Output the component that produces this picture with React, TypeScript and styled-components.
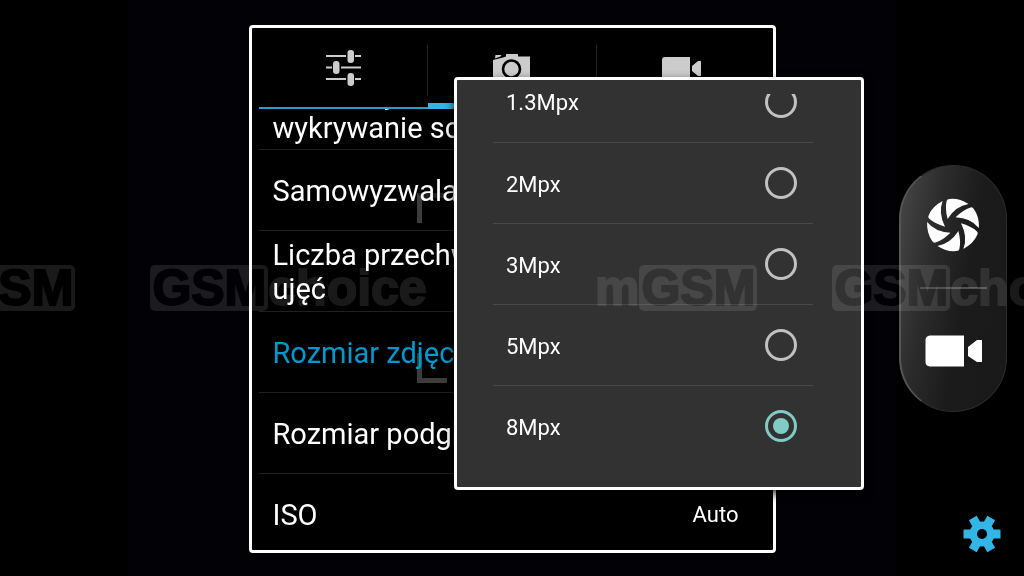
import React, { useState } from "react";
import styled, { createGlobalStyle } from "styled-components";

const GlobalStyle = createGlobalStyle`
  *, *::before, *::after { box-sizing: border-box; }
  body {
    margin: 0;
    background: #000;
    color: #fff;
    font-family: Roboto, "Noto Sans", sans-serif;
  }
  button {
    margin: 0;
    padding: 0;
    border: 0;
    background: none;
    color: inherit;
    font: inherit;
    text-align: left;
  }
`;

const Screen = styled.div`
  position: relative;
  display: grid;
  grid-template-columns: 1fr 6fr 1fr;
  min-height: 100vh;
  overflow: hidden;
`;

const Viewfinder = styled.main`
  grid-column: 2;
  display: flex;
  justify-content: center;
  align-items: flex-start;
  padding: 25px 0 23px;
  background: #020106;
`;

const Panel = styled.section`
  position: relative;
  width: 527px;
  padding: 0 7px;
  border: 3px solid #fff;
  border-radius: 4px;
  background: #000;
`;

const Tabs = styled.nav`
  display: grid;
  grid-template-columns: repeat(3, 1fr);
  height: 81px;
`;

const Tab = styled.button<{ $active?: boolean }>`
  display: flex;
  flex-direction: column;
  align-items: center;
  justify-content: space-between;
  border-bottom: ${(p) => (p.$active ? "6px solid #33b5e5" : "2px solid #2a9bd0")};
  background: linear-gradient(#262626, #262626) right 17px / 1px 51px no-repeat;
  background-position: right 0 top 17px;
  &:last-child { background: none; }
  svg { display: block; margin-top: 20px; }
`;

const SettingsList = styled.ul`
  position: relative;
  height: 441px;
  margin: 0;
  padding: 0;
  overflow: hidden;
  list-style: none;
`;

const SettingItem = styled.li<{ $scrolled?: boolean }>`
  display: flex;
  align-items: ${(p) => (p.$scrolled ? "flex-end" : "center")};
  height: ${(p) => (p.$scrolled ? 41 : 81)}px;
  padding-bottom: ${(p) => (p.$scrolled ? 4 : 0)}px;
  border-bottom: 1px solid #202020;
`;

const SettingButton = styled.button<{ $selected?: boolean }>`
  display: flex;
  flex: 1;
  align-items: center;
  justify-content: space-between;
  padding: 2px 27px 0 14px;
  color: ${(p) => (p.$selected ? "#0099cc" : "#fff")};
  font-size: 29px;
  line-height: 34px;
`;

const SettingName = styled.span`
  max-width: 340px;
`;

const SettingValue = styled.span`
  font-size: 22px;
`;

const FocusFrame = styled.div`
  position: absolute;
  top: 165px;
  left: 165px;
  display: grid;
  grid-template-columns: 30px 30px;
  justify-content: space-between;
  align-content: space-between;
  width: 190px;
  height: 190px;
`;

const FocusCorner = styled.span<{ $side: "left" | "right"; $end: "top" | "bottom" }>`
  height: 30px;
  border: 0 solid #3c3c3c;
  border-${(p) => p.$side}-width: 5px;
  border-${(p) => p.$end}-width: 5px;
  border-top-color: #1e1e1e;
`;

const Popup = styled.form`
  position: absolute;
  top: 77px;
  left: calc(50% - 58px);
  width: 410px;
  padding: 14px 48px 21px 36px;
  border: 3px solid #fff;
  border-radius: 4px;
  background: #323232;
  box-shadow: 0 4px 10px rgba(0, 0, 0, 0.8);
`;

const OptionList = styled.fieldset`
  display: flex;
  flex-direction: column;
  justify-content: flex-end;
  height: 372px;
  min-width: 0;
  margin: 0;
  padding: 0;
  border: 0;
  overflow: hidden;
`;

const Option = styled.label`
  display: flex;
  flex: none;
  align-items: center;
  justify-content: space-between;
  height: 81px;
  padding: 0 16px 0 13px;
  font-size: 22px;
  line-height: 28px;
  & + & { border-top: 1px solid #484848; }
`;

const OptionName = styled.span`
  padding-top: 3px;
`;

const Radio = styled.input`
  appearance: none;
  display: grid;
  place-items: center;
  width: 32px;
  height: 32px;
  margin: 0;
  border: 3px solid #c1c1c1;
  border-radius: 50%;
  &:checked { border-color: #80cbc4; }
  &:checked::before {
    content: "";
    width: 16px;
    height: 16px;
    border-radius: 50%;
    background: #80cbc4;
  }
`;

const Controls = styled.aside`
  grid-column: 3;
  display: grid;
  grid-template-rows: 1fr auto 1fr;
  justify-items: center;
  padding: 0 15px 0 0;
`;

const Capsule = styled.div`
  grid-row: 2;
  display: flex;
  flex-direction: column;
  align-items: center;
  width: 108px;
  height: 247px;
  border: 1px solid #2c2c2c;
  border-left: 2px solid #555;
  border-radius: 54px;
  background: linear-gradient(100deg, #484848 0%, #2c2c2c 30%, #1b1b1b 58%, #191919 100%);
`;

const CaptureButton = styled.button`
  display: grid;
  flex: 1;
  place-items: center;
  width: 67px;
  padding-bottom: 2px;
  & + & {
    padding: 2px 0 0;
    border-top: 2px solid #505050;
  }
`;

const GearButton = styled.button`
  grid-row: 3;
  align-self: end;
  justify-self: end;
  margin: 0 8px 23px 0;
  svg { display: block; }
`;

const Watermark = styled.div`
  position: absolute;
  top: 265px;
  left: 0;
  right: 0;
  display: flex;
  overflow: hidden;
  color: #1a1a1a;
  font: bold 50px/46px "Liberation Sans", Arial, sans-serif;
  -webkit-text-stroke: 2px currentColor;
  stroke-linejoin: round;
  white-space: nowrap;
  mix-blend-mode: screen;
  pointer-events: none;
`;

const MarkRun = styled.div`
  display: flex;
  flex: none;
  width: 682px;
  margin-left: -87px;
  gap: 75px;
  & + & { margin-left: 0; }
`;

const Mark = styled.span`
  display: flex;
  flex: none;
`;

const MarkBox = styled.span`
  padding: 0 2px;
  border-radius: 5px;
  background: #1a1a1a;
  color: #000;
  -webkit-text-stroke: 2px #000;
`;

const SlidersIcon = () => (
  <svg width="35" height="40" viewBox="0 0 35 40" fill="#ccc" aria-hidden="true">
    <path d="M0 7h20v2H0zM29 7h6v2h-6zM0 18.500h6v2H0zM15 18.500h20v2H15zM0 30h20v2H0zM29 30h6v2h-6z" />
    <rect x="21.500" y="2" width="6.500" height="13" rx="3" />
    <rect x="7" y="13" width="6.500" height="13" rx="3" />
    <rect x="21.500" y="25" width="6.500" height="13" rx="3" />
  </svg>
);

const CameraIcon = () => (
  <svg width="38" height="40" viewBox="0 0 38 40" aria-hidden="true">
    <path d="M0 12L10 9.500 13 8.500V6h12v2.500h12v26H0zM2.500 7h6l-1 1.500-5.500 2z" fill="#ccc" />
    <circle cx="18.500" cy="21" r="8.500" fill="#ccc" stroke="#000" strokeWidth="2.600" />
  </svg>
);

const TabVideoIcon = () => (
  <svg width="39" height="40" viewBox="0 0 39 40" fill="#ccc" aria-hidden="true">
    <path d="M3 9h25v23H3q-3 0-3-3V12q0-3 3-3zM30 18l6-5h3v15h-3l-6-5z" />
  </svg>
);

const VideoIcon = () => (
  <svg width="57" height="32" viewBox="0 0 57 32" fill="#fff" aria-hidden="true">
    <path d="M5 .5h34v31H5Q.5 31 .5 27V5Q.5 1 5 .5zM43 12l9-7h5v22h-5l-9-6z" />
  </svg>
);

const ShutterIcon = () => (
  <svg width="54" height="54" viewBox="-80 -80 160 160" fill="#fff" aria-hidden="true">
    {[0, 60, 120, 180, 240, 300].map((angle) => (
      <path
        key={angle}
        transform={`rotate(${angle})`}
        d="M-16-18Q-24-48-19-71Q-18-77-10-77Q18-80 46-62Q8-56-16-18Z"
      />
    ))}
  </svg>
);

const GearIcon = () => (
  <svg width="38" height="38" viewBox="-19 -19 38 38" aria-hidden="true">
    {[0, 60, 120].map((angle) => (
      <rect key={angle} x="-18.500" y="-4.500" width="37" height="9" fill="#33b5e5" transform={`rotate(${angle})`} />
    ))}
    <circle r="12.500" fill="#33b5e5" />
    <circle r="5" fill="#000" />
  </svg>
);

const settings = [
  { name: "Automatyczne wykrywanie scen", scrolled: true },
  { name: "Samowyzwalacz" },
  { name: "Liczba przechwyconych ujęć" },
  { name: "Rozmiar zdjęcia", selected: true },
  { name: "Rozmiar podglądu" },
  { name: "ISO", value: "Auto" },
];

const sizes = ["1.3Mpx", "2Mpx", "3Mpx", "5Mpx", "8Mpx"];

const WatermarkRun = () => (
  <MarkRun>
    <Mark>m<MarkBox>GSM</MarkBox></Mark>
    <Mark><MarkBox>GSM</MarkBox>choice</Mark>
  </MarkRun>
);

export default function App() {
  const [size, setSize] = useState("8Mpx");

  return (
    <>
      <GlobalStyle />
      <Screen>
        <Viewfinder>
          <Panel aria-label="Ustawienia">
            <FocusFrame aria-hidden="true">
              <FocusCorner $side="left" $end="top" />
              <FocusCorner $side="right" $end="top" />
              <FocusCorner $side="left" $end="bottom" />
              <FocusCorner $side="right" $end="bottom" />
            </FocusFrame>
            <Tabs>
              <Tab type="button" aria-label="Ogólne"><SlidersIcon /></Tab>
              <Tab type="button" aria-label="Aparat" $active><CameraIcon /></Tab>
              <Tab type="button" aria-label="Wideo"><TabVideoIcon /></Tab>
            </Tabs>
            <SettingsList>
              {settings.map((s) => (
                <SettingItem key={s.name} $scrolled={s.scrolled}>
                  <SettingButton type="button" $selected={s.selected}>
                    <SettingName>{s.name}</SettingName>
                    {s.value && <SettingValue>{s.value}</SettingValue>}
                  </SettingButton>
                </SettingItem>
              ))}
            </SettingsList>
          </Panel>
        </Viewfinder>
        <Controls>
          <Capsule>
            <CaptureButton type="button" aria-label="Zrób zdjęcie"><ShutterIcon /></CaptureButton>
            <CaptureButton type="button" aria-label="Nagraj wideo"><VideoIcon /></CaptureButton>
          </Capsule>
          <GearButton type="button" aria-label="Ustawienia"><GearIcon /></GearButton>
        </Controls>
        <Popup>
          <OptionList aria-label="Rozmiar zdjęcia">
            {sizes.map((s) => (
              <Option key={s}>
                <OptionName>{s}</OptionName>
                <Radio type="radio" name="size" value={s} checked={size === s} onChange={() => setSize(s)} />
              </Option>
            ))}
          </OptionList>
        </Popup>
        <Watermark aria-hidden="true">
          <WatermarkRun />
          <WatermarkRun />
        </Watermark>
      </Screen>
    </>
  );
}
